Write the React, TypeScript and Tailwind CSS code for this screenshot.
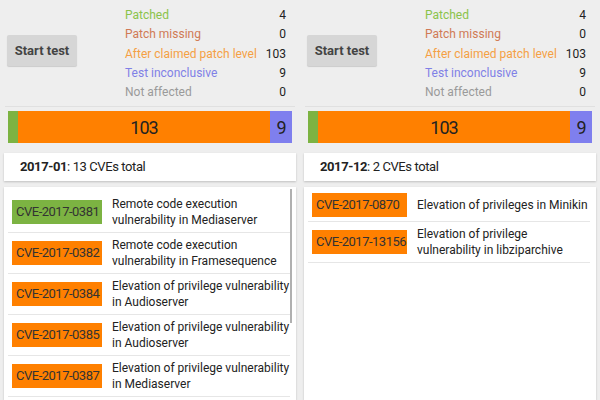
import React from 'react';

type Cve = { id: string; title: string; color: string };

const stats = [
  { label: 'Patched', value: 4, color: 'text-[#8bc34a]' },
  { label: 'Patch missing', value: 0, color: 'text-[#d07a55]' },
  { label: 'After claimed patch level', value: 103, color: 'text-[#f5a044]' },
  { label: 'Test inconclusive', value: 9, color: 'text-[#8080e6]' },
  { label: 'Not affected', value: 0, color: 'text-[#9a9a9a]' },
];

const jan: Cve[] = [
  { id: 'CVE-2017-0381', title: 'Remote code execution vulnerability in Mediaserver', color: 'bg-[#7cb342]' },
  { id: 'CVE-2017-0382', title: 'Remote code execution vulnerability in Framesequence', color: 'bg-[#ff8000]' },
  { id: 'CVE-2017-0384', title: 'Elevation of privilege vulnerability in Audioserver', color: 'bg-[#ff8000]' },
  { id: 'CVE-2017-0385', title: 'Elevation of privilege vulnerability in Audioserver', color: 'bg-[#ff8000]' },
  { id: 'CVE-2017-0387', title: 'Elevation of privilege vulnerability in Mediaserver', color: 'bg-[#ff8000]' },
];

const dec: Cve[] = [
  { id: 'CVE-2017-0870', title: 'Elevation of privileges in Minikin', color: 'bg-[#ff8000]' },
  { id: 'CVE-2017-13156', title: 'Elevation of privilege vulnerability in libziparchive', color: 'bg-[#ff8000]' },
];

function Panel({ month, total, items, badgeW, listPad, scrollbar }: {
  month: string; total: number; items: Cve[]; badgeW: string; listPad: string; scrollbar?: boolean;
}) {
  return (
    <div className="w-[300px] h-[400px] flex flex-col bg-[#eeeeee] overflow-hidden">
      {/* summary */}
      <div className="flex h-[107px] shrink-0 mx-[5px] border-b border-[#e0e0e0]">
        <div className="w-[120px] pl-[2px] pt-[35px]">
          <button className="w-[70px] h-[31px] rounded-[2px] bg-[#d6d6d6] shadow-[0_1px_1px_rgba(0,0,0,0.15)] text-[13px] font-bold text-[#444]">
            Start test
          </button>
        </div>
        <div className="flex-1 pt-[6px] pr-[9px]">
          {stats.map((s) => (
            <div key={s.label} className="flex justify-between text-[12px] leading-[19.3px]">
              <span className={s.color}>{s.label}</span>
              <span className="text-[#222]">{s.value}</span>
            </div>
          ))}
        </div>
      </div>

      {/* bar */}
      <div className="mx-[8px] mt-[4px] h-[32px] shrink-0 flex text-[18px] tracking-[-1px] text-[#222]">
        <div className="w-[10px] bg-[#7cb342]" />
        <div className="flex-1 bg-[#ff8000] flex items-center justify-center">103</div>
        <div className="w-[22px] bg-[#7f7fee] flex items-center justify-center">9</div>
      </div>

      {/* header */}
      <div className="mx-[4px] mt-[10px] h-[28px] shrink-0 bg-white shadow-[0_1px_2px_rgba(0,0,0,0.2)] flex items-center pl-[16px] text-[13px] tracking-[-0.4px] text-[#222]">
        <span className="font-bold">{month}</span>: {total} CVEs total
      </div>

      {/* list */}
      <div className={`relative mx-[4px] mt-[6px] flex-1 bg-white shadow-[0_1px_2px_rgba(0,0,0,0.2)] pl-[4px] pr-[6px] ${listPad}`}>
        {items.map((c) => (
          <div key={c.id} className="flex items-center py-[4px] border-b border-[#e6e6e6]">
            <div className={`${badgeW} shrink-0 h-[24px] ml-[4px] pl-[4px] flex items-center whitespace-nowrap text-[13px] tracking-[-0.5px] text-[#333] ${c.color}`}>
              {c.id}
            </div>
            <div className="flex-1 min-h-[24px] flex items-center pl-[10px] text-[12px] leading-[16px] text-[#222]">
              {c.title}
            </div>
          </div>
        ))}
        {scrollbar && (
          <div className="absolute right-[4px] top-[2px] w-[2px] h-[134px] bg-[#b0b0b0]" />
        )}
      </div>
    </div>
  );
}

export default function App() {
  return (
    <div className="flex w-[600px] h-[400px] bg-[#eeeeee] font-['Roboto',sans-serif]">
      <Panel month="2017-01" total={13} items={jan} badgeW="w-[90px]" listPad="pt-[5px]" scrollbar />
      <Panel month="2017-12" total={2} items={dec} badgeW="w-[95px]" listPad="pt-[2px]" />
    </div>
  );
}
